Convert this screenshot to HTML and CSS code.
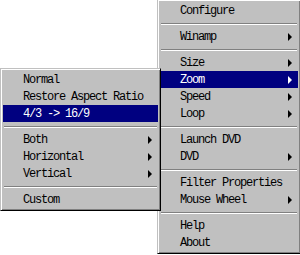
FILE: index.html
```html
<!DOCTYPE html>
<html lang="en">
<head>
    <meta charset="UTF-8">
    <meta name="viewport" content="width=device-width, initial-scale=1.0">
    <title>Player Context Menu</title>
    <link rel="stylesheet" href="styles.css">
</head>
<body>

    <div class="desktop">

        <!-- Main context menu -->
        <ul class="menu main-menu">
            <li class="item">Configure</li>
            <li class="sep"></li>
            <li class="item sub">Winamp</li>
            <li class="sep"></li>
            <li class="item sub">Size</li>
            <li class="item sub active">Zoom</li>
            <li class="item sub">Speed</li>
            <li class="item sub">Loop</li>
            <li class="sep"></li>
            <li class="item">Launch DVD</li>
            <li class="item sub">DVD</li>
            <li class="sep"></li>
            <li class="item">Filter Properties</li>
            <li class="item sub">Mouse Wheel</li>
            <li class="sep"></li>
            <li class="item">Help</li>
            <li class="item">About</li>
        </ul>

        <!-- Zoom submenu, opened from the item above -->
        <ul class="menu zoom-menu">
            <li class="item">Normal</li>
            <li class="item">Restore Aspect Ratio</li>
            <li class="item active">4/3 -&gt; 16/9</li>
            <li class="sep"></li>
            <li class="item sub">Both</li>
            <li class="item sub">Horizontal</li>
            <li class="item sub">Vertical</li>
            <li class="sep"></li>
            <li class="item">Custom</li>
        </ul>

    </div>

</body>
</html>
```

FILE: styles.css
```css
body {
    margin: 0;
    background-color: #fff;
    font-family: "Liberation Mono", monospace;
    font-size: 12px;
}
.desktop {
    position: relative;
    width: 300px;
    height: 255px;
    overflow: hidden;
}
.menu {
    position: absolute;
    box-sizing: border-box;
    list-style: none;
    margin: 0;
    padding: 2px;
    background-color: #c0c0c0;
    border: 1px solid;
    border-color: #c0c0c0 #000 #000 #c0c0c0;
    box-shadow: inset 1px 1px #fff, inset -1px -1px #808080;
}
.main-menu {
    left: 157px;
    top: -1px;
    width: 144px;
}
.zoom-menu {
    left: 0;
    top: 68px;
    width: 161px;
}
.item {
    display: flex;
    align-items: center;
    justify-content: space-between;
    height: 17px;
    padding: 0 6px 0 20px;
    color: #000;
    letter-spacing: -1.2px;
    white-space: pre;
}
.item.sub::after {
    content: "";
    border-left: 4px solid #000;
    border-top: 4px solid transparent;
    border-bottom: 4px solid transparent;
}
.item.active {
    background-color: #000080;
    color: #fff;
}
.item.active.sub::after {
    border-left-color: #fff;
}
.sep {
    height: 0;
    margin: 4px 1px 3px;
    border-top: 1px solid #808080;
    border-bottom: 1px solid #fff;
}
```
